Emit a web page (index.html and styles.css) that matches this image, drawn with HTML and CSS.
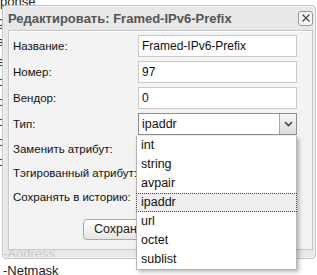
FILE: index.html
```html
<html>
    <head>
        <meta charset="utf-8">
        <title>Редактировать атрибут</title>
        <link rel="stylesheet" href="styles.css">
    </head>
    <body>
        <div class="page">
            <div class="line top">ponse</div>
            <div class="line ghost">g</div>
            <div class="line ghost">a</div>
            <div class="line ghost">e</div>
            <div class="line ghost">p</div>
            <div class="line ghost">p</div>
            <div class="line ghost">p</div>
            <div class="line ghost">p</div>
            <div class="line ghost">p</div>
            <div class="line addr">-Address</div>
            <div class="line net">-Netmask</div>
        </div>

        <div class="window">
            <div class="titlebar">
                <span class="title">Редактировать: Framed-IPv6-Prefix</span>
                <span class="close">
                    <svg width="8" height="8" viewBox="0 0 8 8"><path d="M0.5 0.5 L7.5 7.5 M7.5 0.5 L0.5 7.5" stroke="#444" stroke-width="1.2"/></svg>
                </span>
            </div>
            <div class="panel">
                <div class="form">
                    <label class="lbl">Название:</label>
                    <div class="field">Framed-IPv6-Prefix</div>

                    <label class="lbl">Номер:</label>
                    <div class="field">97</div>

                    <label class="lbl">Вендор:</label>
                    <div class="field">0</div>

                    <label class="lbl">Тип:</label>
                    <div class="select">
                        <span class="select-val">ipaddr</span>
                        <span class="select-btn">
                            <svg width="9" height="6" viewBox="0 0 9 6"><path d="M1 1 L4.5 4.5 L8 1" fill="none" stroke="#444" stroke-width="1.6"/></svg>
                        </span>
                    </div>

                    <label class="lbl">Заменить атрибут:</label>
                    <div class="check-row"><span class="check"></span></div>

                    <label class="lbl">Тэгированный атрибут:</label>
                    <div class="check-row"><span class="check"></span></div>

                    <label class="lbl">Сохранять в историю:</label>
                    <div class="check-row"><span class="check"></span></div>
                </div>
                <div class="buttons">
                    <span class="btn">Сохранить</span>
                    <span class="btn">Отмена</span>
                </div>
            </div>

            <ul class="dropdown">
                <li>int</li>
                <li>string</li>
                <li>avpair</li>
                <li class="hover">ipaddr</li>
                <li>url</li>
                <li>octet</li>
                <li>sublist</li>
            </ul>
        </div>
    </body>
</html>
```

FILE: styles.css
```css
/* page behind the edit window */
body {
    margin: 0;
    width: 317px;
    height: 275px;
    overflow: hidden;
    background: #fff;
    font-family: "Liberation Sans", Arial, sans-serif;
    position: relative;
}
.page {
    padding-left: 3px;
    margin-top: -8px;
    font-size: 13px;
    color: #222;
}
.line {
    height: 20px;
    line-height: 20px;
    white-space: nowrap;
}
.line.top {
    margin-left: -3px;
}
.ghost {
    margin-left: -6px;
}
.addr {
    height: 17px;
    line-height: 17px;
    margin-top: 73px;
}
.net {
    height: 17px;
    line-height: 17px;
}

/* window */
.window {
    position: absolute;
    left: 2px;
    top: 5px;
    width: 312px;
    height: 252px;
    border: 1px solid #c2c2c2;
    border-radius: 4px;
    background: rgba(228, 228, 228, 0.86);
    box-shadow: inset 0 0 0 1px rgba(255,255,255,0.6);
}
.titlebar {
    height: 24px;
    display: flex;
    align-items: center;
    justify-content: space-between;
    padding: 0 2px 0 5px;
}
.title {
    font-weight: bold;
    font-size: 13px;
    color: #555;
}
.close {
    width: 13px;
    height: 13px;
    border: 1px solid #9a9a9a;
    border-radius: 3px;
    background: #f6f6f6;
    display: flex;
    align-items: center;
    justify-content: center;
}

.panel {
    margin-left: 5px;
    margin-right: 2px;
    height: 214px;
    border: 1px solid #c6c6c6;
    background: #f3f3f3;
    box-shadow: inset 1px 1px 0 #fff;
    padding: 4px 15px 0 4px;
}
.form {
    display: grid;
    grid-template-columns: 125px 159px;
    grid-template-rows: 22px 22px 22px 22px 20px 20px 20px;
    row-gap: 4px;
    font-size: 11.5px;
    color: #111;
}
.lbl {
    display: flex;
    align-items: center;
    white-space: nowrap;
}
.field {
    border: 1px solid #c9c9c9;
    background: #fff;
    font-size: 12px;
    padding: 0 3px;
    display: flex;
    align-items: center;
    color: #111;
}
.select {
    border: 1px solid #8f8f8f;
    background: #fff;
    display: flex;
    font-size: 12.5px;
}
.select-val {
    flex: 1;
    display: flex;
    align-items: center;
    padding-left: 3px;
}
.select-btn {
    width: 16px;
    border-left: 1px solid #a8a8a8;
    background: linear-gradient(#f7f7f7, #dcdcdc);
    display: flex;
    align-items: center;
    justify-content: center;
}
.check-row {
    display: flex;
    align-items: center;
    padding-left: 8px;
}
.check {
    width: 12px;
    height: 12px;
    border: 1px solid #999;
    background: #fff;
}

.buttons {
    display: flex;
    gap: 6px;
    margin: 12px 0 0 70px;
}
.btn {
    height: 19px;
    line-height: 19px;
    padding: 0 10px;
    border: 1px solid #a9a9a9;
    border-radius: 4px;
    background: linear-gradient(#fff, #e6e6e6);
    font-size: 12.5px;
    color: #222;
}

/* open list of the type select */
.dropdown {
    position: absolute;
    left: 133px;
    top: 130px;
    width: 159px;
    margin: 0;
    padding: 0;
    list-style: none;
    background: #fff;
    border: 1px solid #b5b5b5;
    border-top: 0;
    box-shadow: 2px 2px 4px rgba(0,0,0,0.28);
    font-size: 12.5px;
    color: #111;
}
.dropdown li {
    height: 17px;
    line-height: 17px;
    padding-left: 4px;
    border: 1px solid transparent;
    margin: 0 -1px;
}
.dropdown li.hover {
    background: #efefef;
    border: 1px dotted #444;
}
```
